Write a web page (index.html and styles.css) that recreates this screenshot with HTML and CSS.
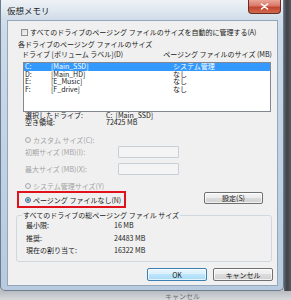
FILE: index.html
```html
<!DOCTYPE html>
<html lang="ja">
<head>
<meta charset="utf-8">
<title>仮想メモリ</title>
<link rel="stylesheet" href="styles.css">
</head>
<body>
<div class="screen">
  <div class="top">
    <div class="window">
      <div class="titlebar">
        <span class="title">仮想メモリ</span>
        <div class="close">
          <svg width="9" height="7" viewBox="0 0 9 7"><path d="M1.5 1 L7.5 6 M7.5 1 L1.5 6" stroke="#fff" stroke-width="1.6" stroke-linecap="round"/></svg>
        </div>
      </div>
      <div class="client">
        <div class="autocheck">
          <span class="checkbox"></span>
          <span>すべてのドライブのページング ファイルのサイズを自動的に管理する(A)</span>
        </div>

        <div class="group group1">
          <div class="legend">各ドライブのページング ファイルのサイズ</div>
          <div class="list-head">
            <span class="c1">ドライブ [ボリューム ラベル](D)</span>
            <span class="c2">ページング ファイルのサイズ (MB)</span>
          </div>
          <div class="listbox">
            <div class="lrow sel"><span class="d">C:</span><span class="v">[Main_SSD]</span><span class="s">システム管理</span></div>
            <div class="lrow"><span class="d">D:</span><span class="v">[Main_HD]</span><span class="s">なし</span></div>
            <div class="lrow"><span class="d">E:</span><span class="v">[E_Music]</span><span class="s">なし</span></div>
            <div class="lrow"><span class="d">F:</span><span class="v">[F_drive]</span><span class="s">なし</span></div>
          </div>
          <div class="info"><span class="lab">選択したドライブ:</span><span>C:&nbsp;&nbsp;[Main_SSD]</span></div>
          <div class="info"><span class="lab">空き領域:</span><span>72425 MB</span></div>

          <div class="radio-row custom"><span class="radio"></span><span>カスタム サイズ(C):</span></div>
          <div class="field-row first"><span class="flab">初期サイズ (MB)(I):</span><span class="input"></span></div>
          <div class="field-row"><span class="flab">最大サイズ (MB)(X):</span><span class="input"></span></div>
          <div class="radio-row sysman"><span class="radio"></span><span>システム管理サイズ(Y)</span></div>
          <div class="set-row">
            <div class="highlight"><span class="radio on"></span><span>ページング ファイルなし(N)</span></div>
            <div class="btn set">設定(S)</div>
          </div>
        </div>

        <div class="group group2">
          <div class="legend">すべてのドライブの総ページング ファイル サイズ</div>
          <div class="trow"><span class="tlab">最小限:</span><span>16 MB</span></div>
          <div class="trow"><span class="tlab">推奨:</span><span>24483 MB</span></div>
          <div class="trow"><span class="tlab">現在の割り当て:</span><span>16322 MB</span></div>
        </div>

        <div class="buttons">
          <div class="btn ok">OK</div>
          <div class="btn">キャンセル</div>
        </div>
      </div>
    </div>
    <div class="desk-right"></div>
  </div>
  <div class="desk-bottom"><span class="ghost">キャンセル</span></div>
</div>
</body>
</html>
```

FILE: styles.css
```css
* { box-sizing: border-box; margin: 0; padding: 0; }
html, body { width: 291px; height: 300px; overflow: hidden; }
body {
  font-family: "Noto Sans CJK JP", "Noto Sans", sans-serif;
  font-size: 7px;
  line-height: 8px;
  color: #1a1a1a;
  background: #c8c8c8;
}
.screen { display: flex; flex-direction: column; width: 291px; height: 300px; }
.top { display: flex; height: 291px; }

.window {
  width: 284px;
  height: 291px;
  display: flex;
  flex-direction: column;
  background: linear-gradient(180deg, #dfe8f1 0%, #cddbe9 10%, #bfd1e4 60%, #b7cade 100%);
  border: 1px solid #6b7c8e;
  border-top: none;
  border-radius: 0 0 5px 5px;
}
.titlebar {
  height: 20px;
  display: flex;
  justify-content: space-between;
  align-items: flex-start;
  background: linear-gradient(180deg, #eef2f6 0%, #dde6ef 60%, #cfdbe8 100%);
}
.title {
  font-size: 8.5px;
  line-height: 9px;
  margin: 6px 0 0 6px;
  color: #1b1b1b;
}
.close {
  width: 33px;
  height: 14px;
  margin-right: 2px;
  display: flex;
  align-items: center;
  justify-content: center;
  border: 1px solid #6a2c25;
  border-top: none;
  border-radius: 0 0 4px 4px;
  background: linear-gradient(180deg, #e9a697 0%, #d9786a 45%, #c2442f 55%, #d06a50 100%);
}

.client {
  margin: 0 5px 0 6px;
  height: 266px;
  background: #f0f0f0;
  border: 1px solid #93a6bb;
  display: flex;
  flex-direction: column;
}
.autocheck {
  display: flex;
  align-items: center;
  height: 8px;
  margin: 7px 0 0 13px;
  gap: 2px;
}
.checkbox {
  width: 7px;
  height: 7px;
  border: 1px solid #8e8f8f;
  background: linear-gradient(135deg, #dcdcdc, #f6f6f6);
}

.group {
  border: 1px solid #cfd8df;
  border-radius: 3px;
  display: flex;
  flex-direction: column;
}
.legend {
  align-self: flex-start;
  background: #f0f0f0;
  margin-top: -5px;
  padding: 0 1px;
  line-height: 8px;
}
.group1 { margin: 8px 4px 0 5px; padding-bottom: 1px; border-color: transparent; }
.group1 .legend { margin-left: 3px; }

.list-head { display: flex; height: 8px; margin-top: 2px; white-space: nowrap; }
.list-head .c1 { margin-left: 8px; width: 150px; }
.listbox {
  margin: 4px 1px 0 9px;
  height: 50px;
  border: 1px solid #828790;
  background: #fff;
}
.lrow { display: flex; height: 7.5px; line-height: 7.5px; white-space: nowrap; }
.lrow.sel { background: #3399ff; color: #fff; }
.lrow .d { width: 27px; padding-left: 1px; }
.lrow .v { width: 122px; }

.info { display: flex; height: 7px; line-height: 7px; }
.info .lab { width: 81px; margin-left: 11px; }

.radio-row { display: flex; align-items: center; height: 8px; margin-left: 11px; gap: 2px; }
.radio-row.custom { margin-top: 10px; color: #a3a3a3; }
.radio-row.sysman { margin-top: 7px; color: #a3a3a3; }
.radio {
  width: 6px;
  height: 6px;
  border-radius: 50%;
  border: 1px solid #a9acaf;
  background: radial-gradient(circle, #f4f4f4 0%, #dcdcdc 100%);
}
.radio.on {
  border-color: #4a6f93;
  background: radial-gradient(circle, #6fa3d4 0%, #2b6aa7 45%, #e6eef5 60%, #dadada 100%);
}

.field-row { display: flex; align-items: center; height: 12px; margin-top: 5px; color: #a3a3a3; }
.field-row.first { margin-top: 2px; }
.flab { width: 93px; margin-left: 11px; }
.input {
  width: 61px;
  height: 12px;
  border: 1px solid #c9cfd6;
  background: #f4f4f4;
  border-radius: 1px;
}

.set-row { display: flex; justify-content: space-between; align-items: flex-start; margin-top: 1px; }
.highlight {
  display: flex;
  align-items: center;
  gap: 2px;
  width: 109px;
  height: 17px;
  margin-left: 3px;
  padding-left: 6px;
  border: 2px solid #e0131c;
}

.btn {
  display: flex;
  align-items: center;
  justify-content: center;
  height: 13px;
  width: 60px;
  border: 1px solid #707070;
  border-radius: 2px;
  background: linear-gradient(180deg, #f4f4f4 0%, #ececec 45%, #dcdcdc 50%, #d0d0d0 100%);
  box-shadow: inset 0 0 0 1px rgba(255,255,255,0.7);
}
.btn.set { margin: 1px 9px 0 0; height: 12px; width: 59px; }
.btn.ok {
  border-color: #3c7fb1;
  background: linear-gradient(180deg, #eaf6fd 0%, #d9f0fc 45%, #bee6fd 50%, #a7d9f5 100%);
}

.group2 { margin: 5px 5px 0 8px; height: 47px; }
.group2 .legend { margin-left: 5px; }
.trow { display: flex; height: 12.5px; align-items: center; }
.tlab { width: 88px; margin-left: 9px; }

.buttons { display: flex; justify-content: flex-end; gap: 6px; margin: 6px 4px 0 0; }

.desk-right {
  flex: 1;
  background: linear-gradient(90deg, #5f6670 0%, #3f4247 40%, #55585c 100%);
}
.desk-bottom {
  height: 9px;
  background: linear-gradient(180deg, #b8bcc1, #d7d9dc);
  padding-left: 165px;
  overflow: hidden;
}
.ghost { font-size: 7px; line-height: 8px; color: #6d6f72; display: block; margin-top: 1px; }
```
